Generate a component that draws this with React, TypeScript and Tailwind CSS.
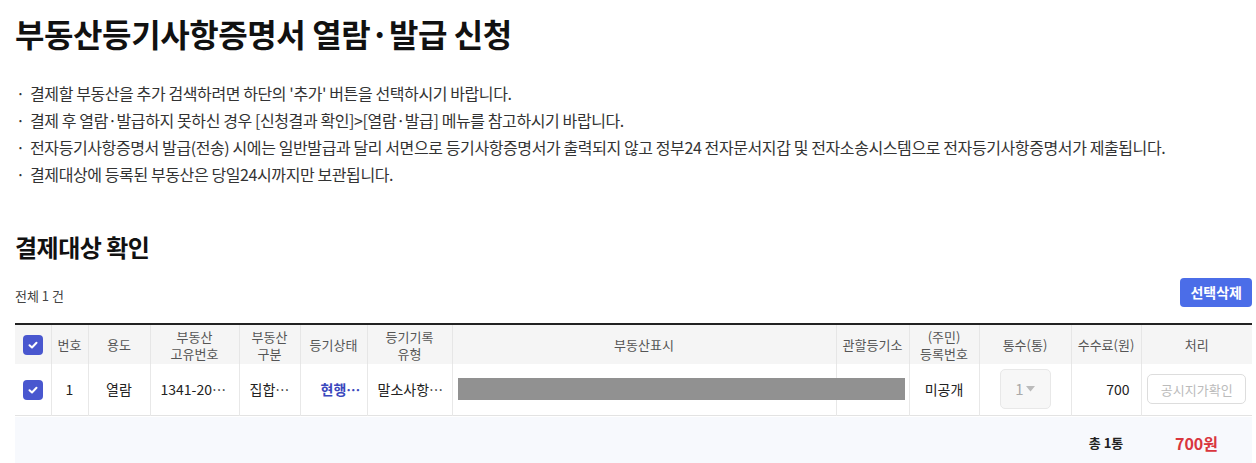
import React from 'react'

const font = { fontFamily: '"Noto Sans CJK KR", "Noto Sans", sans-serif' }

interface Column {
  label: string[]
  width: number
}

const columns: Column[] = [
  { label: [], width: 36 },
  { label: ['번호'], width: 37 },
  { label: ['용도'], width: 62 },
  { label: ['부동산', '고유번호'], width: 89 },
  { label: ['부동산', '구분'], width: 61 },
  { label: ['등기상태'], width: 67 },
  { label: ['등기기록', '유형'], width: 85 },
  { label: ['부동산표시'], width: 384 },
  { label: ['관할등기소'], width: 73 },
  { label: ['(주민)', '등록번호'], width: 70 },
  { label: ['통수(통)'], width: 92 },
  { label: ['수수료(원)'], width: 70 },
  { label: ['처리'], width: 111 },
]

const notices = [
  "결제할 부동산을 추가 검색하려면 하단의 '추가' 버튼을 선택하시기 바랍니다.",
  '결제 후 열람·발급하지 못하신 경우 [신청결과 확인]>[열람·발급] 메뉴를 참고하시기 바랍니다.',
  '전자등기사항증명서 발급(전송) 시에는 일반발급과 달리 서면으로 등기사항증명서가 출력되지 않고 정부24 전자문서지갑 및 전자소송시스템으로 전자등기사항증명서가 제출됩니다.',
  '결제대상에 등록된 부동산은 당일24시까지만 보관됩니다.',
]

const CheckBox: React.FC = () => (
  <span className="inline-flex w-[20px] h-[20px] rounded-[4px] bg-[#4957cf] items-center justify-center align-middle">
    <svg width="12" height="12" viewBox="0 0 12 12" fill="none">
      <path
        d="M2.5 6.2 L5 8.5 L9.5 3.8"
        stroke="white"
        strokeWidth="2"
        strokeLinecap="round"
        strokeLinejoin="round"
      />
    </svg>
  </span>
)

const App: React.FC = () => {
  return (
    <div className="bg-white w-[1256px] h-[463px] overflow-hidden pl-[15px]" style={font}>
      <h1 className="pt-[13px] text-[32px] leading-[40px] font-bold text-[#111] tracking-[-0.4px]">
        부동산등기사항증명서 열람·발급 신청
      </h1>

      <ul className="mt-[27px] text-[16px] leading-[27px] text-[#333] tracking-[-0.4px]">
        {notices.map((n) => (
          <li key={n} className="flex">
            <span className="w-[15px] shrink-0 pl-[1px]">·</span>
            <span>{n}</span>
          </li>
        ))}
      </ul>

      <h2 className="mt-[42px] text-[24px] leading-[34px] font-bold text-[#111] tracking-[-0.5px]">
        결제대상 확인
      </h2>

      <div className="w-[1237px] mt-[14px] flex items-end justify-between">
        <span className="text-[13px] leading-[20px] text-[#444] mb-[1px]">전체 1 건</span>
        <button className="h-[29px] px-[10px] rounded-[4px] bg-[#4b6de8] text-white text-[14px] font-bold">
          선택삭제
        </button>
      </div>

      <table className="mt-[16px] w-[1237px] table-fixed border-collapse border-t-2 border-[#222] border-b border-b-[#e3e3e3]">
        <colgroup>
          {columns.map((c, i) => (
            <col key={i} style={{ width: c.width }} />
          ))}
        </colgroup>
        <thead>
          <tr className="h-[40px] bg-[#f5f5f5] text-[13px] leading-[17px] text-[#555]">
            {columns.map((c, i) => (
              <th
                key={i}
                className={`font-normal text-center px-[2px] ${
                  i < columns.length - 1 ? 'border-r border-[#e6e6e6]' : ''
                }`}
              >
                {i === 0 ? (
                  <CheckBox />
                ) : (
                  c.label.map((l) => (
                    <div key={l} className="whitespace-nowrap">
                      {l}
                    </div>
                  ))
                )}
              </th>
            ))}
          </tr>
        </thead>
        <tbody>
          <tr className="h-[51px] text-[14px] text-[#222] text-center">
            <td className="border-r border-[#e8e8e8]">
              <CheckBox />
            </td>
            <td className="border-r border-[#e8e8e8]">1</td>
            <td className="border-r border-[#e8e8e8]">열람</td>
            <td className="border-r border-[#e8e8e8] px-[10px] truncate text-left">1341-2012-001234</td>
            <td className="border-r border-[#e8e8e8] px-[10px] truncate text-left">집합건물</td>
            <td className="border-r border-[#e8e8e8] pl-[20px] pr-[4px] truncate text-left font-bold text-[#3a48bd]">
              현행등기
            </td>
            <td className="border-r border-[#e8e8e8] pl-[10px] pr-[6px] truncate text-left">말소사항포함</td>
            <td className="border-r border-[#e8e8e8] pl-[5px] relative">
              <div className="w-[447px] h-[22px] bg-[#919191] relative z-10" />
            </td>
            <td className="border-r border-[#e8e8e8]" />
            <td className="border-r border-[#e8e8e8]">미공개</td>
            <td className="border-r border-[#e8e8e8]">
              <div className="mx-auto w-[51px] h-[40px] rounded-[5px] border border-[#e8e8e8] bg-[#f7f7f7] flex items-center justify-center gap-[2px] text-[15px] text-[#aaa]">
                1
                <svg width="9" height="6" viewBox="0 0 9 6">
                  <path d="M0 0 H9 L4.5 5.5 Z" fill="#bbb" />
                </svg>
              </div>
            </td>
            <td className="border-r border-[#e8e8e8] text-right pr-[11px]">700</td>
            <td>
              <button className="w-[99px] h-[30px] rounded-[5px] border border-[#ddd] bg-white text-[13px] text-[#bbb]">
                공시지가확인
              </button>
            </td>
          </tr>
        </tbody>
      </table>

      <div className="w-[1237px] mt-[1px] h-[60px] bg-[#f7f9fd] flex items-center justify-end pb-[8px]">
        <span className="w-[70px] text-center text-[13px] font-bold text-[#222]">총 1통</span>
        <span className="w-[111px] text-center text-[16px] font-bold text-[#d9363e]">700원</span>
      </div>
    </div>
  )
}

export default App
